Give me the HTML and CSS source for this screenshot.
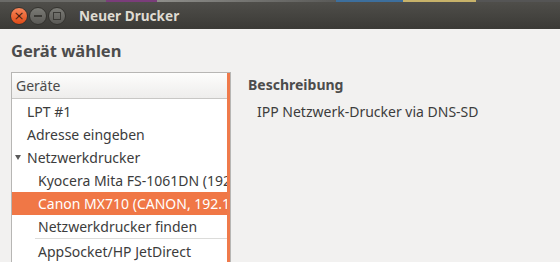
FILE: index.html
```html
<!DOCTYPE html>
<html lang="de">
<head>
    <meta charset="UTF-8">
    <title>Neuer Drucker</title>
    <link rel="stylesheet" href="styles.css">
</head>
<body>
    <div class="desktop"></div>
    <header class="titlebar">
        <div class="buttons">
            <span class="btn btn-close">&#215;</span>
            <span class="btn btn-min"><i class="bar"></i></span>
            <span class="btn btn-max"><i class="box"></i></span>
        </div>
        <h1 class="title">Neuer Drucker</h1>
    </header>
    <main class="content">
        <h2 class="heading">Gerät wählen</h2>
        <div class="columns">
            <section class="devices">
                <div class="devices-head">Geräte</div>
                <ul class="device-list">
                    <li class="item">LPT #1</li>
                    <li class="item">Adresse eingeben</li>
                    <li class="item group"><span class="arrow"></span>Netzwerkdrucker</li>
                    <li class="item child">Kyocera Mita FS-1061DN (192.168.0.12)</li>
                    <li class="item child selected">Canon MX710 (CANON, 192.168.0.20)</li>
                    <li class="item child">Netzwerkdrucker finden</li>
                    <li class="separator"></li>
                    <li class="item child">AppSocket/HP JetDirect</li>
                </ul>
                <div class="scrollbar"></div>
            </section>
            <section class="info">
                <h3 class="info-title">Beschreibung</h3>
                <p class="info-text">IPP Netzwerk-Drucker via DNS-SD</p>
            </section>
        </div>
    </main>
</body>
</html>
```

FILE: styles.css
```css
body{
    margin:0;
    height:262px;
    overflow:hidden;
    background-color:#f2f1f0;
    font-family:"Noto Sans", "DejaVu Sans", sans-serif;
    color:#3c3c3c;
}
.desktop{
    height:2px;
    background:linear-gradient(90deg, #6b6b68 0%, #6b6b68 19%, #7a3d7a 19%, #7a3d7a 28%, #8e8e8a 28%, #5a5a58 60%, #3d6f9d 60%, #3d6f9d 72%, #c7b26a 72%, #c7b26a 85%, #555 85%);
}
.titlebar{
    display:flex;
    align-items:center;
    height:27px;
    background:linear-gradient(#4f4e4a, #3b3a36);
    padding-left:10px;
}
.buttons{
    display:flex;
    gap:1px;
}
.btn{
    width:16px;
    height:16px;
    border-radius:50%;
    display:flex;
    align-items:center;
    justify-content:center;
    background:linear-gradient(#7a7a75, #5b5a56);
    border:1px solid #34332f;
}
.btn-close{
    background:linear-gradient(#f7865a, #df4b17);
    color:#4a2010;
    font-size:13px;
    line-height:16px;
    font-family:"DejaVu Sans", sans-serif;
}
.bar{
    width:8px;
    height:2px;
    background:#3a3935;
}
.box{
    width:6px;
    height:6px;
    border:1px solid #3a3935;
}
.title{
    margin:0 0 0 13px;
    font-size:13.6px;
    font-weight:bold;
    color:#dfdbd2;
}
.content{
    padding:0 0 0 11px;
}
.heading{
    margin:12px 0 0;
    font-size:16.5px;
    line-height:20px;
    font-weight:bold;
    color:#4c4c4c;
}
.columns{
    display:flex;
    margin-top:11px;
}
.devices{
    position:relative;
    width:218px;
    height:200px;
    background:#fff;
    border:1px solid #b7b6b4;
    border-bottom:none;
    overflow:hidden;
}
.devices-head{
    height:25px;
    line-height:25px;
    padding-left:4px;
    font-size:14px;
    background:linear-gradient(#fdfdfc, #eeedec);
    border-bottom:1px solid #c8c7c5;
    color:#4a4a4a;
}
.device-list{
    list-style:none;
    margin:0;
    padding:1px 0 0;
}
.item{
    height:23px;
    line-height:23px;
    padding-left:15px;
    font-size:14px;
    white-space:nowrap;
    overflow:hidden;
    position:relative;
}
.child{
    padding-left:26px;
}
.selected{
    background:#f07746;
    color:#fff;
}
.arrow{
    position:absolute;
    left:3px;
    top:9px;
    border-left:3px solid transparent;
    border-right:3px solid transparent;
    border-top:5px solid #5a5a5a;
}
.separator{
    height:1px;
    margin:0 0 1px 23px;
    background:#dcdcda;
}
.scrollbar{
    position:absolute;
    top:0;
    right:0;
    width:3px;
    height:100%;
    background:#ef7a4b;
}
.info{
    padding-left:17px;
}
.info-title{
    margin:3px 0 0;
    font-size:14px;
    font-weight:bold;
    color:#4c4c4c;
}
.info-text{
    margin:8px 0 0 9px;
    font-size:14px;
}
```
